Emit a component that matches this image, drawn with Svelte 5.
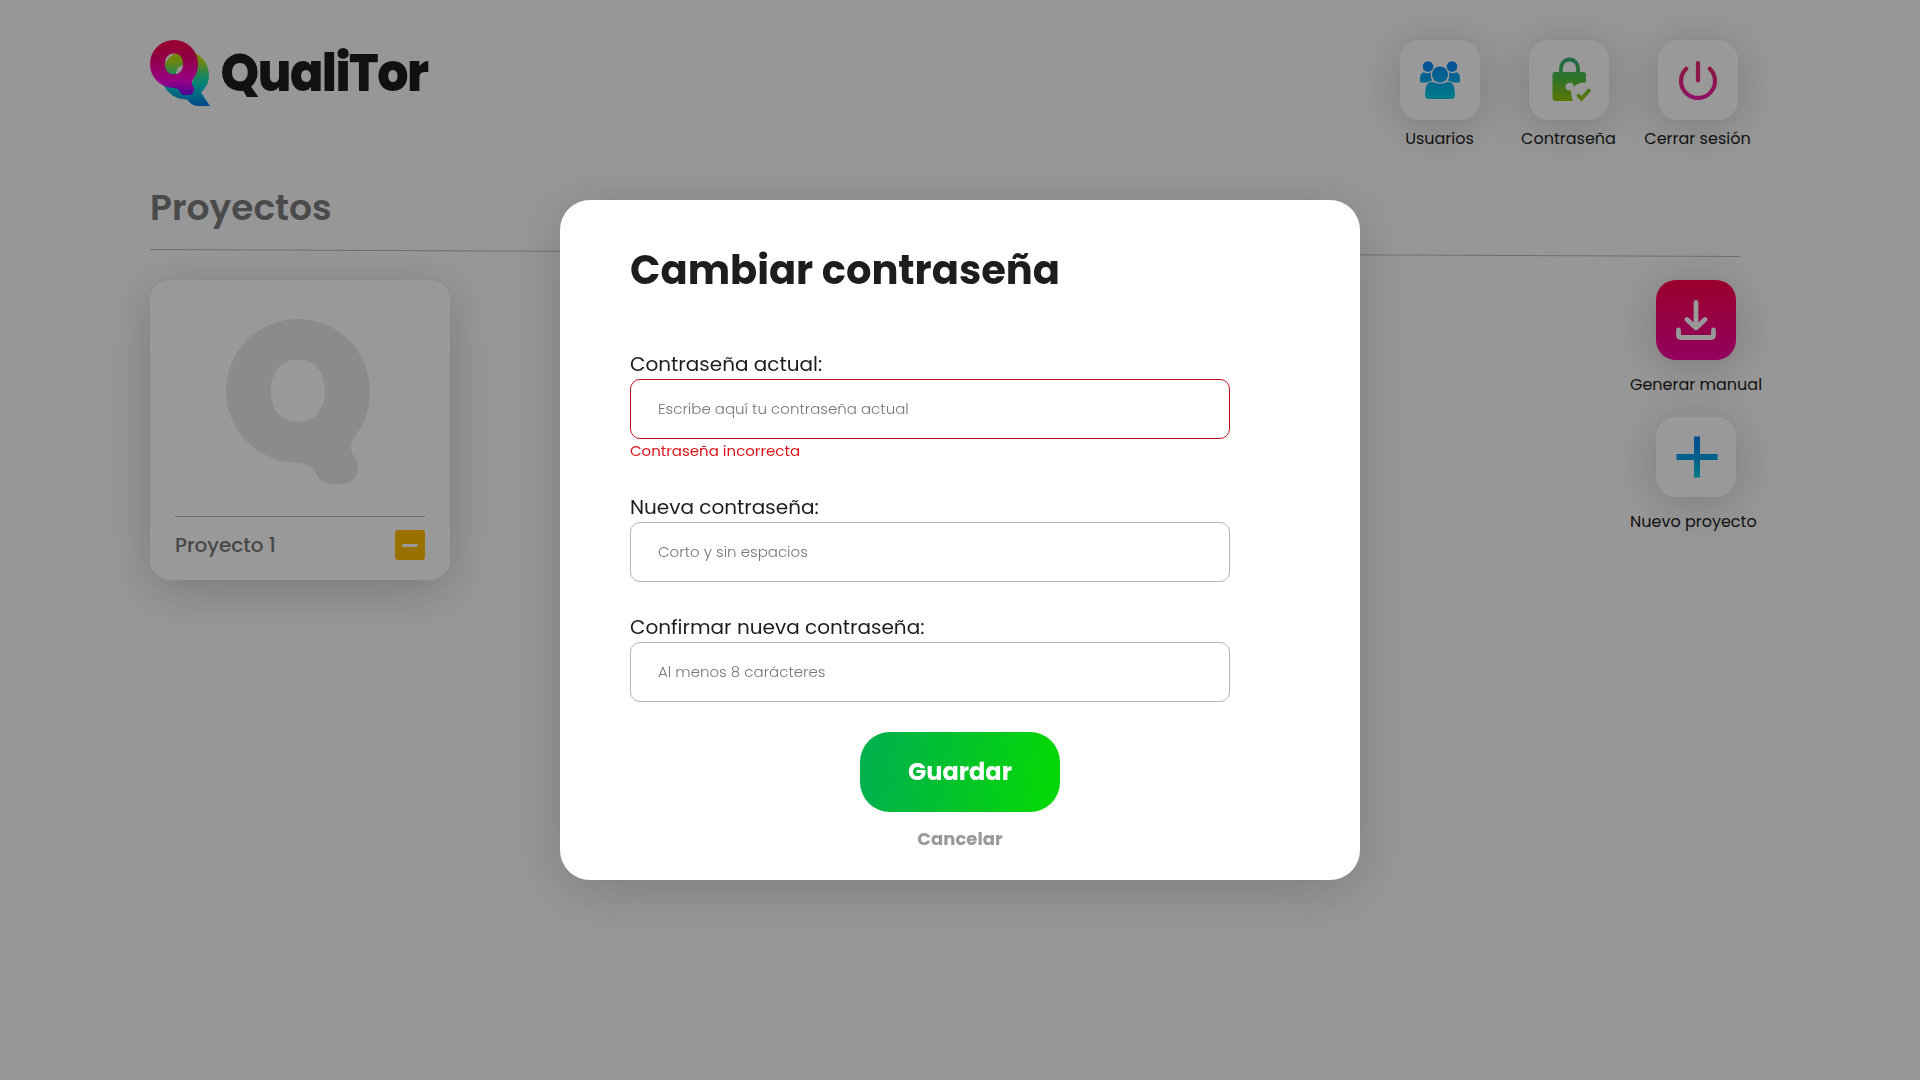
<script>
  const Q = 'M72 0A72 72 0 0 0 72 144C80 144 86 147 90 155C94 162 99 165 106 165H115C125 165 132 158 132 149C132 143 130 140 127.500 136.500C124 131 124 124 129 117C138 106 144 92 144 72A72 72 0 0 0 72 0ZM72 40.500C90 40.500 99 54 99 72C99 92 88 103 72 103C56 103 45 92 45 72C45 54 54 40.500 72 40.500Z';
  const fields = [
    { id: 'actual', label: 'Contraseña actual:', hint: 'Escribe aquí tu contraseña actual', error: 'Contraseña incorrecta' },
    { id: 'nueva', label: 'Nueva contraseña:', hint: 'Corto y sin espacios' },
    { id: 'confirmar', label: 'Confirmar nueva contraseña:', hint: 'Al menos 8 carácteres' }
  ];
</script>

<div class="page">
  <header>
    <svg class="logo" width="300" height="67" viewBox="0 0 300 67">
      <defs>
        <linearGradient id="front" gradientUnits="userSpaceOnUse" x1="0" y1="0" x2="0" y2="165">
          <stop offset="0" stop-color="#ff004b" /><stop offset=".3" stop-color="#f0006c" />
          <stop offset=".75" stop-color="#fa00e0" /><stop offset="1" stop-color="#7a00ff" />
        </linearGradient>
        <linearGradient id="back" gradientUnits="userSpaceOnUse" x1="0" y1="11" x2="0" y2="66">
          <stop offset="0" stop-color="#d4e000" /><stop offset=".2" stop-color="#b0e020" /><stop offset=".42" stop-color="#38e08c" />
          <stop offset=".62" stop-color="#00d8d0" /><stop offset="1" stop-color="#0078e6" />
        </linearGradient>
      </defs>
      <path fill="url(#back)" fill-rule="evenodd" d="M35 11A24 24 0 1 0 37 59.500C40 63 43 66 48 66H60L51 52.500C56 48 59 42 59 35A24 24 0 0 0 35 11ZM35 25C41 25 44 29 44 35S41 45 35 45S26 41 26 35S29 25 35 25Z" />
      <path fill="url(#front)" fill-rule="evenodd" transform="scale(.3333)" d={Q} />
      <text x="70.500" y="50.500" textLength="207" lengthAdjust="spacingAndGlyphs">QualiTor</text>
    </svg>
    <nav>
      <a class="item">
        <span class="tile">
          <svg width="40" height="38" viewBox="0 0 40 38">
            <defs><linearGradient id="blue" gradientUnits="userSpaceOnUse" x1="0" y1="0" x2="0" y2="38"><stop offset="0" stop-color="#0084ff" /><stop offset="1" stop-color="#00cfe0" /></linearGradient></defs>
            <g fill="url(#blue)">
              <circle cx="8" cy="5.500" r="5.300" /><circle cx="32" cy="5.500" r="5.300" />
              <circle cx="20" cy="13.500" r="8" />
              <path d="M3.500 11.200Q7 13 11 11.500Q10 16.500 12.500 19.500Q9 20 7.500 21.500H1.500Q0 21.500 0 20V17Q0 13 3.500 11.200Z" />
              <path d="M36.500 11.200Q33 13 29 11.500Q30 16.500 27.500 19.500Q31 20 32.500 21.500H38.500Q40 21.500 40 20V17Q40 13 36.500 11.200Z" />
              <path d="M12 20.700Q20 25 28 20.700Q34 21.500 34.500 28.500L35 34Q35 38 31 38H9Q5 38 5 34L5.500 28.500Q6 21.500 12 20.700Z" />
            </g>
          </svg>
        </span>
        <span class="label">Usuarios</span>
      </a>
      <a class="item">
        <span class="tile">
          <svg class="lock" width="40" height="45" viewBox="0 0 40 45">
            <defs><linearGradient id="green" gradientUnits="userSpaceOnUse" x1="0" y1="0" x2="0" y2="45"><stop offset="0" stop-color="#36ae78" /><stop offset=".45" stop-color="#4abf45" /><stop offset="1" stop-color="#98c800" /></linearGradient></defs>
            <path d="M9 16V11A8.500 8.500 0 0 1 26 11V16" fill="none" stroke="url(#green)" stroke-width="3.800" />
            <path fill="url(#green)" d="M3 15H31Q34 15 34 18V25.500Q26 25 21.500 30.500C23.500 25 14.500 24 13.500 29C13 32 15.500 34 19 33.500Q18.500 39 21 44H4Q0.500 44 0.500 40.500V18Q0.500 15 3 15Z" />
            <path d="M25.500 37.500L29.500 41.800L37.800 32.500" fill="none" stroke="url(#green)" stroke-width="3.600" />
          </svg>
        </span>
        <span class="label">Contraseña</span>
      </a>
      <a class="item">
        <span class="tile">
          <svg width="40" height="40" viewBox="0 0 40 40">
            <defs><linearGradient id="pink" gradientUnits="userSpaceOnUse" x1="0" y1="0" x2="0" y2="40"><stop offset="0" stop-color="#e92b68" /><stop offset="1" stop-color="#f020ab" /></linearGradient></defs>
            <path d="M20 3.200L20.010 20.500M8.200 8.700A17 17 0 1 0 31.800 8.700" fill="none" stroke="url(#pink)" stroke-width="4.200" stroke-linecap="round" />
          </svg>
        </span>
        <span class="label">Cerrar sesión</span>
      </a>
    </nav>
  </header>

  <h2>Proyectos</h2>
  <svg class="rule" width="1590" height="8" viewBox="0 0 1590 8"><path d="M0 .5L1590 7.500" stroke="#b9b9b9" /></svg>

  <main>
    <article class="card">
      <svg class="cover" width="144" height="165" viewBox="0 0 144 165"><path fill="#e8e8e8" fill-rule="evenodd" d={Q} /></svg>
      <footer>
        <span>Proyecto 1</span>
        <button class="minus" aria-label="Eliminar"><i></i></button>
      </footer>
    </article>
    <aside>
      <a class="action">
        <span class="tile magenta">
          <svg width="42" height="42" viewBox="0 0 42 42" fill="none" stroke="#fff" stroke-width="4.800" stroke-linecap="round" stroke-linejoin="round"><path d="M21 3.500V28M12 20.500L21 29L30 20.500M3.500 31V36Q3.500 38.500 6 38.500H36Q38.500 38.500 38.500 36V31" /></svg>
        </span>
        <span class="label">Generar manual</span>
      </a>
      <a class="action">
        <span class="tile">
          <svg class="plus" width="42" height="42" viewBox="0 0 42 42">
            <defs><linearGradient id="cross" x1="0" y1="0" x2="0" y2="1"><stop offset="0" stop-color="#007ef0" /><stop offset=".5" stop-color="#009fe8" /><stop offset="1" stop-color="#00c8dc" /></linearGradient></defs>
            <path fill="url(#cross)" d="M18 .500H24V18H41.500V24H24V41.500H18V24H.500V18H18Z" />
          </svg>
        </span>
        <span class="label">Nuevo proyecto</span>
      </a>
    </aside>
  </main>
</div>

<div class="overlay">
  <form class="modal">
    <h1>Cambiar contraseña</h1>
    {#each fields as f}
      <div class="field" class:invalid={f.error}>
        <label for={f.id}>{f.label}</label>
        <input id={f.id} placeholder={f.hint} />
        {#if f.error}<p>{f.error}</p>{/if}
      </div>
    {/each}
    <div class="buttons">
      <button type="button" class="save">Guardar</button>
      <button type="button" class="cancel">Cancelar</button>
    </div>
  </form>
</div>

<style>
  :global(body) { background: #fcfcfc; overflow: hidden; }
  .page, .overlay { font-family: Poppins, Inter, sans-serif; color: #1d1d1b; }
  .page { height: 1080px; box-sizing: border-box; padding-top: 40px; }
  svg { display: block; }
  h1, h2, p { margin: 0; }
  button { border: 0; padding: 0; font: inherit; }
  header { display: flex; justify-content: space-between; padding: 0 182px 35px 150px; }
  .logo { overflow: visible; }
  .logo text { font-size: 53px; font-weight: 800; letter-spacing: -1.6px; fill: #1d1d1b; }
  nav { display: flex; gap: 49px; }
  .item { width: 80px; display: flex; flex-direction: column; align-items: center; gap: 7px; }
  .tile { width: 80px; height: 80px; border-radius: 20px; background: #fff; display: grid; place-items: center; box-shadow: 0 6px 48px rgba(0, 0, 0, .2); }
  .label { font-size: 16px; line-height: 24px; white-space: nowrap; }
  .item .label { margin-right: 1px; }
  .lock { margin: -1px 0 0 6px; }
  .plus { margin-left: 2px; }
  h2 { padding-left: 150px; font-size: 36px; line-height: 44px; font-weight: 600; color: #7c7c7c; }
  .rule { margin: 19px 0 23px 150px; }
  main { display: flex; justify-content: space-between; align-items: flex-start; padding: 0 158px 0 150px; }
  .card { width: 300px; height: 300px; box-sizing: border-box; padding: 39px 25px 20px; border-radius: 20px; background: #fff; box-shadow: 0 10px 50px rgba(0, 0, 0, .2); display: flex; flex-direction: column; justify-content: space-between; }
  .cover { margin-left: 51px; }
  footer { display: flex; align-items: center; justify-content: space-between; border-top: 1px solid #bbb; padding-top: 13px; font-size: 20px; font-weight: 500; color: #777; }
  .minus { width: 30px; height: 30px; border-radius: 3px; background: #ffba00; display: grid; place-items: center; }
  .minus i { width: 16px; height: 3px; border-radius: 1.5px; background: #fff; }
  aside { width: 132px; display: flex; flex-direction: column; gap: 20px; }
  .action { display: flex; flex-direction: column; gap: 13px; }
  .action .tile { margin-left: 26px; }
  .magenta { background: linear-gradient(#ff0049, #f500a0); }
  .overlay { position: fixed; inset: 0; background: rgba(0, 0, 0, .4); display: grid; place-items: center; }
  .modal { width: 800px; height: 680px; box-sizing: border-box; padding: 46px 70px 0; border-radius: 30px; background: #fff; box-shadow: 0 10px 60px rgba(0, 0, 0, .18); }
  h1 { font-size: 40px; line-height: 48px; font-weight: 700; margin-bottom: 55px; }
  .field { width: 600px; margin-bottom: 30px; }
  label { display: block; font-size: 20px; line-height: 30px; }
  input { display: block; box-sizing: border-box; width: 600px; height: 60px; padding: 0 27px 2px; border: 1px solid #b5b5b5; border-radius: 10px; background: #fff; font: 300 15px Poppins, Inter, sans-serif; }
  input::placeholder { color: #777; opacity: 1; }
  .invalid input { border-color: #b9131a; }
  p { height: 23px; font-size: 15px; line-height: 23px; color: #d9151b; }
  .buttons { display: flex; flex-direction: column; align-items: center; gap: 15px; }
  .save { width: 200px; height: 80px; padding-bottom: 2px; border-radius: 30px; background: linear-gradient(100deg, #00b249 10%, #05d60a 90%); color: #fff; font-size: 24px; font-weight: 700; }
  .cancel { background: none; color: #999; font-size: 18px; line-height: 24px; font-weight: 700; }
</style>
